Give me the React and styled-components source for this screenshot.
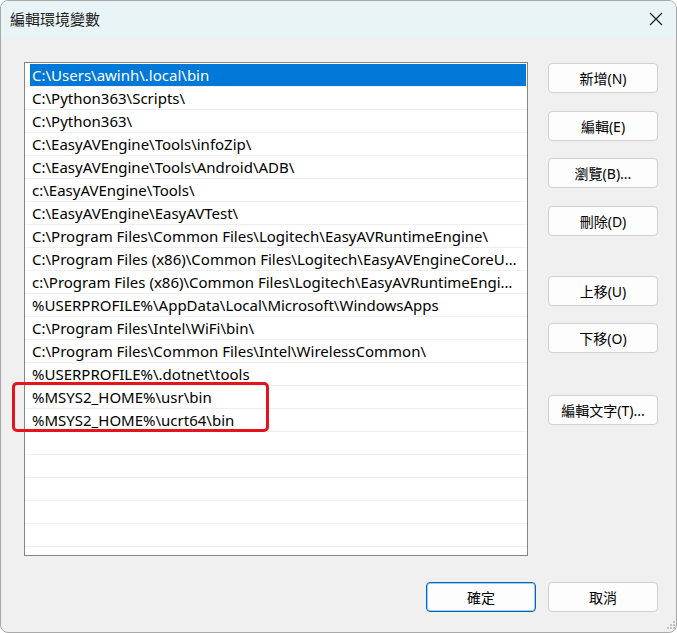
import React from 'react';
import styled, { createGlobalStyle } from 'styled-components';

const GlobalStyle = createGlobalStyle`
  html, body {
    margin: 0;
    padding: 0;
    background: #ffffff;
  }
  * {
    box-sizing: border-box;
  }
`;

const FONT = `"Noto Sans", "Noto Sans CJK TC", sans-serif`;

const Window = styled.div`
  position: relative;
  width: 677px;
  height: 633px;
  border: 1px solid #a9a9a9;
  border-radius: 8px;
  overflow: hidden;
  background: #f0f0f0;
  font-family: ${FONT};
  color: #000;
  display: flex;
  flex-direction: column;
`;

const TitleBar = styled.div`
  height: 37px;
  flex: none;
  display: flex;
  align-items: center;
  justify-content: space-between;
  background: #e9f4f7;
  padding: 0 13px 2px 9px;
`;

const Title = styled.span`
  font-family: "Noto Sans CJK TC", sans-serif;
  font-size: 15px;
  color: #1b1b1b;
`;

const CloseIcon = styled.svg`
  width: 14px;
  height: 14px;
  display: block;
`;

const Content = styled.div`
  flex: 1;
  display: flex;
  flex-direction: column;
  padding: 24px 18px 0 23px;
`;

const Main = styled.div`
  display: flex;
  gap: 20px;
`;

const ListBox = styled.div`
  width: 504px;
  height: 494px;
  flex: none;
  background: #ffffff;
  border: 1px solid #858585;
  padding-top: 1px;
  overflow: hidden;
`;

const Row = styled.div`
  height: 23px;
  border-bottom: 1px solid #efefef;
  padding: 0 1px 0 5px;
`;

const Cell = styled.div`
  height: 22px;
  line-height: 22px;
  padding: 0 8px 0 2px;
  font-size: 15px;
  white-space: nowrap;
  overflow: hidden;
  text-overflow: ellipsis;
  background: ${p => (p.$selected ? '#0078d7' : 'transparent')};
  color: ${p => (p.$selected ? '#ffffff' : '#000000')};
`;

const Side = styled.div`
  width: 110px;
  display: flex;
  flex-direction: column;
  padding-top: 1px;
`;

const Button = styled.button`
  width: 110px;
  height: 30px;
  margin-top: ${p => p.$space || 0}px;
  background: #fdfdfd;
  border: 1px solid ${p => (p.$primary ? '#0067c0' : '#d0d0d0')};
  box-shadow: ${p => (p.$primary ? 'inset 0 0 0 1px rgba(0,103,192,0.35)' : 'none')};
  border-radius: 4px;
  font-family: ${FONT};
  font-size: 14px;
  color: #000;
  padding: 0;
  display: flex;
  align-items: center;
  justify-content: center;
`;

const Footer = styled.div`
  display: flex;
  justify-content: flex-end;
  gap: 12px;
  margin-top: 26px;
`;

const Highlight = styled.div`
  position: absolute;
  left: 11px;
  top: 381px;
  width: 257px;
  height: 50px;
  border: 3px solid #e5141c;
  border-radius: 5px;
  pointer-events: none;
`;

const Grip = styled.svg`
  position: absolute;
  right: 0;
  bottom: 0;
  width: 14px;
  height: 12px;
`;

const paths = [
  'C:\\Users\\awinh\\.local\\bin',
  'C:\\Python363\\Scripts\\',
  'C:\\Python363\\',
  'C:\\EasyAVEngine\\Tools\\infoZip\\',
  'C:\\EasyAVEngine\\Tools\\Android\\ADB\\',
  'c:\\EasyAVEngine\\Tools\\',
  'C:\\EasyAVEngine\\EasyAVTest\\',
  'C:\\Program Files\\Common Files\\Logitech\\EasyAVRuntimeEngine\\',
  'C:\\Program Files (x86)\\Common Files\\Logitech\\EasyAVEngineCoreUpdater\\',
  'c:\\Program Files (x86)\\Common Files\\Logitech\\EasyAVRuntimeEngine\\',
  '%USERPROFILE%\\AppData\\Local\\Microsoft\\WindowsApps',
  'C:\\Program Files\\Intel\\WiFi\\bin\\',
  'C:\\Program Files\\Common Files\\Intel\\WirelessCommon\\',
  '%USERPROFILE%\\.dotnet\\tools',
  '%MSYS2_HOME%\\usr\\bin',
  '%MSYS2_HOME%\\ucrt64\\bin',
];

const rows = [...paths, ...Array(6).fill('')];

const sideButtons = [
  { label: '新增(N)', space: 0 },
  { label: '編輯(E)', space: 18 },
  { label: '瀏覽(B)...', space: 17 },
  { label: '刪除(D)', space: 18 },
  { label: '上移(U)', space: 40 },
  { label: '下移(O)', space: 17 },
  { label: '編輯文字(T)...', space: 42 },
];

export default function App() {
  return (
    <>
      <GlobalStyle />
      <Window>
        <TitleBar>
          <Title>編輯環境變數</Title>
          <CloseIcon viewBox="0 0 14 14">
            <path d="M1 1 L13 13 M13 1 L1 13" stroke="#1a1a1a" strokeWidth="1.1" fill="none" />
          </CloseIcon>
        </TitleBar>
        <Content>
          <Main>
            <ListBox>
              {rows.map((p, i) => (
                <Row key={i}>
                  <Cell $selected={i === 0}>{p}</Cell>
                </Row>
              ))}
            </ListBox>
            <Side>
              {sideButtons.map(b => (
                <Button key={b.label} $space={b.space}>{b.label}</Button>
              ))}
            </Side>
          </Main>
          <Footer>
            <Button $primary>確定</Button>
            <Button>取消</Button>
          </Footer>
        </Content>
        <Highlight />
        <Grip viewBox="0 0 14 12">
          <g fill="#c4c4c4">
            <rect x="11" y="1" width="2" height="2" />
            <rect x="8" y="4" width="2" height="2" />
            <rect x="11" y="4" width="2" height="2" />
            <rect x="5" y="7" width="2" height="2" />
            <rect x="8" y="7" width="2" height="2" />
            <rect x="11" y="7" width="2" height="2" />
          </g>
        </Grip>
      </Window>
    </>
  );
}
